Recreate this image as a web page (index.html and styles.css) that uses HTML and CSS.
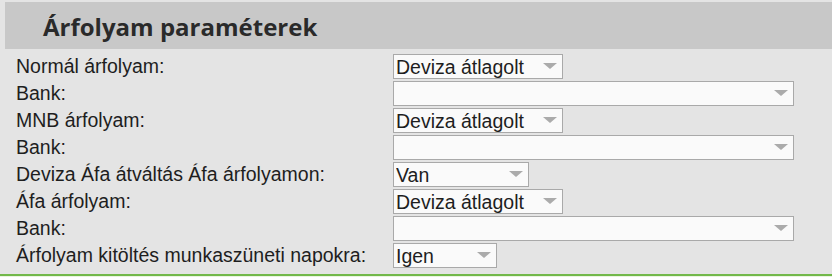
FILE: index.html
```html
<!DOCTYPE html>
<html lang="hu">
<head>
    <meta charset="UTF-8">
    <title>Árfolyam paraméterek</title>
    <link rel="stylesheet" href="styles.css">
</head>
<body>
    <h2 class="section-title">Árfolyam paraméterek</h2>
    <!-- Exchange rate settings -->
    <div class="param-form">
        <label class="param-label">Normál árfolyam:</label>
        <div class="pick pick-mid"><select><option>Deviza átlagolt</option></select></div>

        <label class="param-label">Bank:</label>
        <div class="pick pick-wide"><select><option></option></select></div>

        <label class="param-label">MNB árfolyam:</label>
        <div class="pick pick-mid"><select><option>Deviza átlagolt</option></select></div>

        <label class="param-label">Bank:</label>
        <div class="pick pick-wide"><select><option></option></select></div>

        <label class="param-label">Deviza Áfa átváltás Áfa árfolyamon:</label>
        <div class="pick pick-van"><select><option>Van</option></select></div>

        <label class="param-label">Áfa árfolyam:</label>
        <div class="pick pick-mid"><select><option>Deviza átlagolt</option></select></div>

        <label class="param-label">Bank:</label>
        <div class="pick pick-wide"><select><option></option></select></div>

        <label class="param-label">Árfolyam kitöltés munkaszüneti napokra:</label>
        <div class="pick pick-small"><select><option>Igen</option></select></div>
    </div>
    <div class="footer-bar"></div>
</body>
</html>
```

FILE: styles.css
```css
body {
    margin: 0;
    background-color: #e4e4e4;
    font-family: "Liberation Sans", Arial, sans-serif;
    color: #1e1e1e;
}
.section-title {
    margin: 2px 0 0 5px;
    height: 47px;
    padding-left: 38px;
    box-sizing: border-box;
    background-color: #c8c8c8;
    font-family: "Open Sans", sans-serif;
    font-size: 24px;
    font-weight: bold;
    line-height: 49px;
    color: #2a2a2a;
}
.param-form {
    display: grid;
    grid-template-columns: 377px auto;
    row-gap: 2px;
    margin-top: 5px;
    padding-left: 16px;
}
.param-label {
    font-size: 19.5px;
    line-height: 25px;
}
.pick {
    position: relative;
    height: 25px;
}
.pick select {
    appearance: none;
    -webkit-appearance: none;
    width: 100%;
    height: 25px;
    margin: 0;
    padding: 0 0 0 2px;
    border: 1px solid #a9a9a9;
    border-radius: 0;
    background-color: #fafafa;
    font-family: "Liberation Sans", Arial, sans-serif;
    font-size: 19.5px;
    color: #1e1e1e;
    box-sizing: border-box;
}
.pick::after {
    content: "";
    position: absolute;
    right: 6px;
    top: 9px;
    border-left: 7px solid transparent;
    border-right: 7px solid transparent;
    border-top: 6px solid #ababab;
}
.pick-mid { width: 170px; }
.pick-wide { width: 401px; }
.pick-van { width: 136px; }
.pick-small { width: 104px; }
.footer-bar {
    margin-top: 6px;
    height: 10px;
    border-top: 2px solid #72b84a;
    background-color: #e9f4df;
}
```
